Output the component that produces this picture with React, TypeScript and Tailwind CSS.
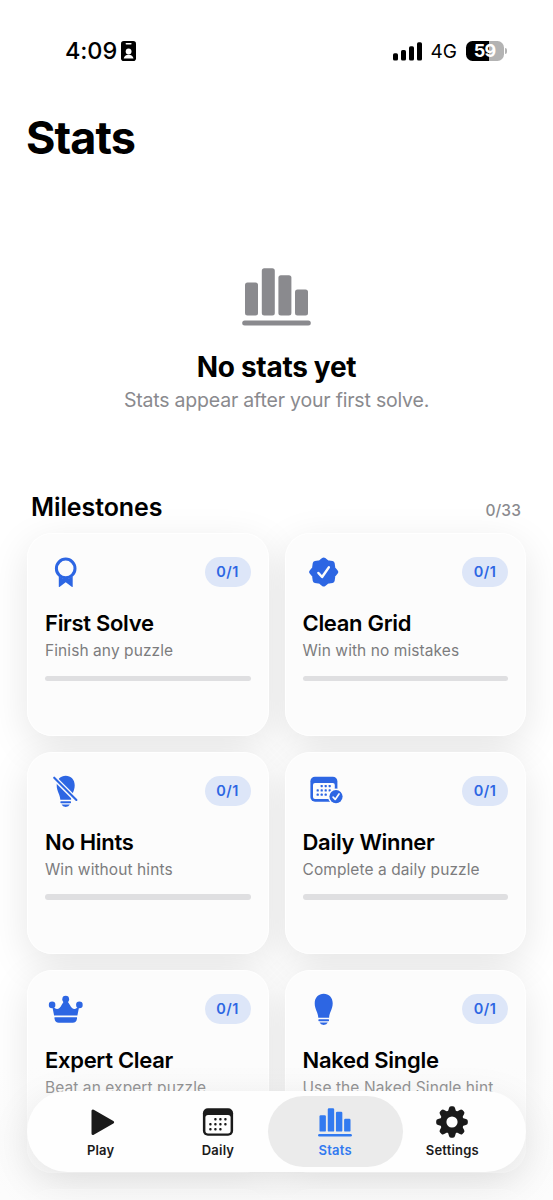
import type { ReactNode } from "react";

interface Milestone {
  title: string;
  subtitle: string;
  icon: ReactNode;
}

const ChartIcon = ({ className }: { className: string }) => (
  <svg viewBox="0 0 69 58" className={className} fill="currentColor">
    <rect x="3" y="14.5" width="13" height="33" rx="2.5" />
    <rect x="19.8" y="0.3" width="13" height="47.2" rx="2.5" />
    <rect x="36.4" y="7.3" width="13" height="40.2" rx="2.5" />
    <rect x="53" y="21.5" width="13" height="26" rx="2.5" />
    <rect x="0.2" y="52.5" width="68.6" height="5" rx="2.5" />
  </svg>
);

const RibbonIcon = () => (
  <svg viewBox="0 0 42 42" className="size-[42px]" fill="currentColor">
    <circle cx="20.7" cy="17.4" r="9.3" fill="none" stroke="currentColor" strokeWidth="3" />
    <path d="M13.8 25.6 Q20.7 30.2 27.7 25.6 V35.4 Q27.7 36.6 26.7 35.8 L20.7 31.3 L14.8 35.8 Q13.8 36.6 13.8 35.4Z" />
  </svg>
);

const SealIcon = () => (
  <svg viewBox="0 0 42 42" className="size-[42px]">
    <g fill="currentColor" stroke="currentColor" strokeWidth="5" strokeLinejoin="round">
      <path d="M20.7 9 L24.1 11.8 L29.2 12.5 L29.9 17.6 L32.8 21 L29.9 24.4 L29.2 29.5 L24.1 30.2 L20.7 33 L17.3 30.2 L12.2 29.5 L11.5 24.4 L8.6 21 L11.5 17.6 L12.2 12.5 L17.3 11.8Z" />
    </g>
    <path d="M15.4 22 L19.1 26 L25.8 16.4" fill="none" stroke="#fcfcfc" strokeWidth="2.5" strokeLinecap="round" strokeLinejoin="round" />
  </svg>
);

const BulbShape = () => (
  <g fill="currentColor">
    <path d="M15.3 29.8 C15 24 11.7 21.5 11.7 15.3 C11.7 9.6 15.6 5.8 20.7 5.8 C25.8 5.8 29.7 9.6 29.7 15.3 C29.7 21.5 26.4 24 26.1 29.8Z" />
    <rect x="15.4" y="31.2" width="10.6" height="2" rx="0.6" />
    <path d="M16.6 34.5 H24.8 Q23.8 36.9 20.7 36.9 Q17.6 36.9 16.6 34.5Z" />
  </g>
);

const BulbIcon = () => (
  <svg viewBox="0 0 42 42" className="size-[42px]">
    <BulbShape />
  </svg>
);

const BulbSlashIcon = () => (
  <svg viewBox="0 0 42 42" className="size-[42px]">
    <BulbShape />
    <path d="M6.5 5.2 L33.5 32.2" stroke="#fcfcfc" strokeWidth="4.8" />
    <path d="M9.2 7.7 L31.4 29.9" stroke="currentColor" strokeWidth="2.1" strokeLinecap="round" />
  </svg>
);

const calendarDots = [
  [1, 0], [2, 0], [3, 0],
  [0, 1], [1, 1], [2, 1], [3, 1],
  [0, 2], [1, 2], [2, 2],
];

const CalendarCheckIcon = () => (
  <svg viewBox="0 0 42 42" className="size-[42px]">
    <rect x="7.4" y="6.7" width="27" height="25" rx="4.6" fill="currentColor" />
    <rect x="10" y="13.1" width="21.8" height="15.8" rx="2" fill="#fcfcfc" />
    {calendarDots.map(([x, y]) => (
      <rect key={`${x}-${y}`} x={13.6 + x * 4} y={15 + y * 4.3} width="2.2" height="2.2" rx="0.6" fill="currentColor" />
    ))}
    <circle cx="33" cy="26.6" r="8" fill="#fcfcfc" />
    <circle cx="33" cy="26.6" r="6.6" fill="currentColor" />
    <path d="M30.1 27.1 L32.2 29.4 L36 24" fill="none" stroke="#fcfcfc" strokeWidth="1.7" strokeLinecap="round" strokeLinejoin="round" />
  </svg>
);

const CrownIcon = () => (
  <svg viewBox="0 0 42 42" className="size-[42px]" fill="currentColor">
    <circle cx="20.7" cy="11.2" r="3.4" />
    <circle cx="7.1" cy="16.9" r="3.3" />
    <circle cx="34.4" cy="16.9" r="3.3" />
    <path d="M7.2 18 C10.5 21.6 14 22.4 16.6 17 L19.4 12.4 H22 L24.9 17 C27.5 22.4 31 21.6 34.3 18 L32.4 27.4 H9.1Z" />
    <path d="M9.5 29.2 H32 V30.5 Q31.4 34.8 27.6 34.8 H13.9 Q10.1 34.8 9.5 30.5Z" />
  </svg>
);

const PlayIcon = () => (
  <svg viewBox="0 0 34 34" className="size-[34px]">
    <path d="M9 6 V28.5 L28.6 17.3Z" fill="currentColor" stroke="currentColor" strokeWidth="3" strokeLinejoin="round" />
  </svg>
);

const CalendarIcon = () => (
  <svg viewBox="0 0 34 34" className="size-[34px]">
    <rect x="1.9" y="3.2" width="30.2" height="27.6" rx="5" fill="currentColor" />
    <rect x="4.4" y="10" width="25.2" height="18.4" rx="2.6" fill="#fefefe" />
    {calendarDots.map(([x, y]) => (
      <rect key={`${x}-${y}`} x={8.2 + x * 5} y={13 + y * 5} width="2.4" height="2.4" rx="0.9" fill="currentColor" />
    ))}
  </svg>
);

const GearIcon = () => (
  <svg viewBox="0 0 34 34" className="size-[34px]">
    <g fill="currentColor">
      {[0, 45, 90, 135, 180, 225, 270, 315].map((angle) => (
        <path key={angle} transform={`rotate(${angle} 17 17)`} d="M12.7 7.5 L14 3 Q14.4 1.2 16 1.2 H18 Q19.6 1.2 20 3 L21.3 7.5Z" />
      ))}
      <path fillRule="evenodd" d="M17 5.2 a11.8 11.8 0 1 0 0 23.6 a11.8 11.8 0 1 0 0 -23.6Z M17 11.4 a5.6 5.6 0 1 1 0 11.2 a5.6 5.6 0 1 1 0 -11.2Z" />
    </g>
  </svg>
);

const milestones: Milestone[] = [
  { title: "First Solve", subtitle: "Finish any puzzle", icon: <RibbonIcon /> },
  { title: "Clean Grid", subtitle: "Win with no mistakes", icon: <SealIcon /> },
  { title: "No Hints", subtitle: "Win without hints", icon: <BulbSlashIcon /> },
  { title: "Daily Winner", subtitle: "Complete a daily puzzle", icon: <CalendarCheckIcon /> },
  { title: "Expert Clear", subtitle: "Beat an expert puzzle", icon: <CrownIcon /> },
  { title: "Naked Single", subtitle: "Use the Naked Single hint", icon: <BulbIcon /> },
];

const tabs = [
  { label: "Play", icon: <PlayIcon /> },
  { label: "Daily", icon: <CalendarIcon /> },
  { label: "Stats", icon: <ChartIcon className="w-[34px] h-[29px]" />, active: true },
  { label: "Settings", icon: <GearIcon /> },
];

const StatusBar = () => (
  <header className="flex h-[102px] items-center justify-between pl-[65px] pr-[46px]">
    <div className="flex items-center gap-[4px]">
      <span className="text-[23.5px] font-medium tracking-[-0.1px] leading-none">4:09</span>
      <svg viewBox="0 0 15 20" className="h-5 w-[15px]">
        <rect width="15" height="20" rx="2.8" fill="#000" />
        <rect x="4.6" y="2" width="6" height="1.5" rx="0.7" fill="#fff" />
        <circle cx="7.6" cy="10.5" r="2.9" fill="#fff" />
        <path d="M2.7 17.6 Q3.4 13.8 7.6 13.8 Q11.8 13.8 12.5 17.6Z" fill="#fff" />
      </svg>
    </div>
    <div className="flex items-center">
      <svg viewBox="0 0 29 19" className="h-[19px] w-[29px]">
        <rect x="0" y="11.2" width="5" height="7.4" rx="1.6" />
        <rect x="8" y="8" width="5" height="10.6" rx="1.6" />
        <rect x="16" y="4.2" width="5" height="14.4" rx="1.6" />
        <rect x="24" y="0.3" width="5" height="18.3" rx="1.6" />
      </svg>
      <span className="ml-[9px] w-[27px] text-[19px] leading-none tracking-[-0.1px]">4G</span>
      <div className="ml-[8px] flex h-5 w-[38px] items-center justify-center rounded-[6.5px] bg-linear-to-r from-black from-60% to-[#b3b3b3] to-60% text-[18px] font-bold leading-none tracking-[-0.8px] text-white">
        59
      </div>
      <div className="ml-[1.5px] h-[6px] w-[2px] rounded-r-full bg-[#b3b3b3]" />
    </div>
  </header>
);

const MilestoneCard = ({ title, subtitle, icon }: Milestone) => (
  <div className="rounded-[25px] shadow-[0_11px_40px_rgba(0,0,0,0.1)]">
    <div className="relative z-10 h-[202.5px] rounded-[25px] border border-white bg-[#fcfcfc] px-[17px] pt-[17px]">
      <div className="flex items-center justify-between text-[#2d66e3]">
        {icon}
        <span className="flex h-[30px] w-[46px] items-center justify-center rounded-full bg-[#dde6f8] text-[14.5px] font-semibold tracking-[0.5px]">
          0/1
        </span>
      </div>
      <h3 className="mt-4 text-[22px] font-semibold leading-7 tracking-[-0.3px]">{title}</h3>
      <p className="mt-[3px] whitespace-nowrap text-[15.5px] leading-[22px] tracking-[0.08px] text-[#7c7c7e]">{subtitle}</p>
      <div className="mt-[13.5px] h-[5.5px] rounded-full bg-[#dfdfe1]" />
    </div>
  </div>
);

export default function App() {
  return (
    <main className="relative h-[1200px] w-[553px] overflow-hidden bg-white font-[Inter,sans-serif] text-black">
      <StatusBar />
      <h1 className="ml-[26px] h-[72px] text-[45px] font-bold leading-[72px] tracking-[-0.9px]">Stats</h1>

      <section className="mt-[94px] flex flex-col items-center">
        <ChartIcon className="h-[58px] w-[69px] text-[#8a8a8e]" />
        <h2 className="mt-[23px] text-[28px] font-bold leading-9 tracking-[-0.3px]">No stats yet</h2>
        <p className="mt-[1px] text-[19.5px] leading-7 tracking-[-0.2px] text-[#8a8a8e]">Stats appear after your first solve.</p>
      </section>

      <section className="mt-[72px] px-[27px]">
        <div className="relative z-10 flex h-[47px] items-start justify-between pl-[4px] pr-[5px]">
          <h2 className="pt-[5px] text-[25px] font-semibold leading-8 tracking-[-0.1px]">Milestones</h2>
          <span className="pt-[15px] text-[15.5px] font-medium leading-5 tracking-[0.1px] text-[#8a8a8e]">0/33</span>
        </div>
        <div className="grid grid-cols-2 gap-x-[16px] gap-y-[16px]">
          {milestones.map((milestone) => (
            <MilestoneCard key={milestone.title} {...milestone} />
          ))}
          <div className="relative z-10 h-[202px] rounded-[25px] border border-white bg-[#fcfcfc]" />
          <div className="relative z-10 h-[202px] rounded-[25px] border border-white bg-[#fcfcfc]" />
        </div>
      </section>

      <div className="absolute inset-x-0 bottom-0 z-20 h-[135px] bg-linear-to-b from-[#fafafa]/0 to-[#fafafa]/60 to-50%" />
      <nav className="absolute bottom-[28px] left-[27px] z-30 flex h-[81px] w-[499px] items-center rounded-full bg-[#fefefe] px-[15px] shadow-[0_10px_40px_rgba(0,0,0,0.09)]">
        {tabs.map((tab) => (
          <div
            key={tab.label}
            className={
              tab.active
                ? "mx-[-9px] flex h-[71px] w-[135px] shrink-0 flex-col items-center rounded-full bg-[#ebebeb] pt-[9px] text-[#327af0]"
                : "flex h-[71px] flex-1 flex-col items-center pt-[9px] text-[#1a1a1a]"
            }
          >
            <div className="flex h-[34px] items-center justify-center">{tab.icon}</div>
            <span className="mt-[3px] text-[13px] font-semibold leading-4 tracking-[0.2px]">{tab.label}</span>
          </div>
        ))}
      </nav>
    </main>
  );
}
